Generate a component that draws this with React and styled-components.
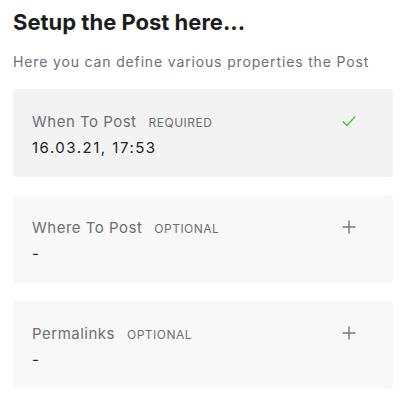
import React from 'react'
import styled, { createGlobalStyle } from 'styled-components'

const GlobalStyle = createGlobalStyle`
  body {
    margin: 0;
    background: #fff;
    font-family: Inter, "Noto Sans", sans-serif;
  }
`

const Panel = styled.div`
  width: 380px;
  padding: 8px 13px 0;
`

const Title = styled.h1`
  margin: 0;
  font-size: 22px;
  line-height: 28px;
  font-weight: 700;
  color: #1d1d20;
`

const Subtitle = styled.p`
  margin: 16px 0 0;
  font-size: 14px;
  line-height: 20px;
  letter-spacing: 0.85px;
  color: #6e6e76;
`

const List = styled.div`
  display: flex;
  flex-direction: column;
  gap: 18px;
  margin-top: 17px;
`

const Card = styled.div`
  display: flex;
  justify-content: space-between;
  align-items: flex-start;
  height: 88px;
  box-sizing: border-box;
  padding: 23px 37px 0 19px;
  border-radius: 4px;
  background: ${p => (p.$filled ? '#f3f3f3' : '#f8f8f8')};
`

const Head = styled.div`
  display: flex;
  align-items: baseline;
  gap: 12px;
`

const Label = styled.span`
  font-size: 15px;
  line-height: 20px;
  letter-spacing: 0.5px;
  color: #6e6e76;
`

const Tag = styled.span`
  font-size: 12px;
  letter-spacing: 0.5px;
  text-transform: uppercase;
  color: #6e6e76;
`

const Value = styled.div`
  margin-top: 6px;
  font-size: 15px;
  line-height: 20px;
  letter-spacing: 1.5px;
  color: #222226;
`

const Icon = styled.svg`
  margin-top: 2px;
  flex: none;
`

const Check = () => (
  <Icon width="14" height="14" viewBox="0 0 14 14" fill="none">
    <path d="M0.8 7.4l4.2 4 8.2-9" stroke="#45c034" strokeWidth="1.4" />
  </Icon>
)

const Plus = () => (
  <Icon width="14" height="14" viewBox="0 0 14 14" fill="none">
    <path d="M7 0.5v13M0.5 7h13" stroke="#76767e" strokeWidth="1.4" />
  </Icon>
)

const fields = [
  { label: 'When To Post', tag: 'Required', value: '16.03.21, 17:53', done: true },
  { label: 'Where To Post', tag: 'Optional', value: '-' },
  { label: 'Permalinks', tag: 'Optional', value: '-' }
]

export default function App () {
  return (
    <Panel>
      <GlobalStyle />
      <Title>Setup the Post here...</Title>
      <Subtitle>Here you can define various properties the Post</Subtitle>
      <List>
        {fields.map(f => (
          <Card key={f.label} $filled={f.done}>
            <div>
              <Head>
                <Label>{f.label}</Label>
                <Tag>{f.tag}</Tag>
              </Head>
              <Value>{f.value}</Value>
            </div>
            {f.done ? <Check /> : <Plus />}
          </Card>
        ))}
      </List>
    </Panel>
  )
}
